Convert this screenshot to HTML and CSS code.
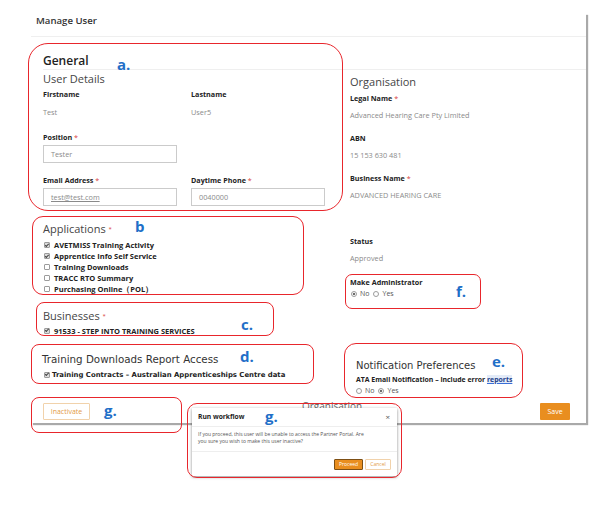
FILE: index.html
```html
<!DOCTYPE html>
<html lang="en">
<head>
<meta charset="utf-8">
<title>Manage User</title>
<link rel="stylesheet" href="styles.css">
</head>
<body>
<div class="page">
  <div class="panel">
    <div class="panel-head">Manage User</div>
    <div class="tab-row"><span class="tab-title">General</span></div>
    <div class="panel-body">
      <div class="col-left">
        <h2 class="sec-title ud-title">User Details</h2>
        <div class="field-grid">
          <div class="field">
            <div class="label">Firstname</div>
            <div class="value">Test</div>
          </div>
          <div class="field">
            <div class="label">Lastname</div>
            <div class="value">User5</div>
          </div>
          <div class="field r2">
            <div class="label">Position <span class="req">*</span></div>
            <div class="input">Tester</div>
          </div>
          <div class="field r3">
            <div class="label">Email Address <span class="req">*</span></div>
            <div class="input"><span class="u">test@test.com</span></div>
          </div>
          <div class="field r3">
            <div class="label">Daytime Phone <span class="req">*</span></div>
            <div class="input">0040000</div>
          </div>
        </div>

        <h2 class="sec-title apps-title">Applications <span class="req-h">*</span></h2>
        <ul class="checks apps-list">
          <li class="check"><span class="cb on"></span>AVETMISS Training Activity</li>
          <li class="check"><span class="cb on"></span>Apprentice Info Self Service</li>
          <li class="check"><span class="cb"></span>Training Downloads</li>
          <li class="check"><span class="cb"></span>TRACC RTO Summary</li>
          <li class="check"><span class="cb"></span>Purchasing Online（POL）</li>
        </ul>

        <h2 class="sec-title biz-title">Businesses <span class="req-h">*</span></h2>
        <ul class="checks biz-list">
          <li class="check"><span class="cb on"></span>91533 - STEP INTO TRAINING SERVICES</li>
        </ul>

        <h2 class="tdr-title">Training Downloads Report Access</h2>
        <ul class="checks tdr-list">
          <li class="check tdr-check"><span class="cb on"></span>Training Contracts – Australian Apprenticeships Centre data</li>
        </ul>
      </div>

      <div class="col-right">
        <h2 class="sec-title org-title">Organisation</h2>
        <div class="label first">Legal Name <span class="req">*</span></div>
        <div class="value">Advanced Hearing Care Pty Limited</div>
        <div class="label next">ABN</div>
        <div class="value">15 153 630 481</div>
        <div class="label next">Business Name <span class="req">*</span></div>
        <div class="value">ADVANCED HEARING CARE</div>
        <div class="label status">Status</div>
        <div class="value">Approved</div>
        <div class="label admin">Make Administrator</div>
        <div class="radios admin-radios">
          <span class="rd on"></span><span class="rl">No</span>
          <span class="rd"></span><span class="rl">Yes</span>
        </div>
        <div class="notif">
          <h2 class="notif-title">Notification Preferences</h2>
          <div class="notif-label">ATA Email Notification – include error <span class="hl">reports</span></div>
          <div class="radios notif-radios">
            <span class="rd"></span><span class="rl">No</span>
            <span class="rd on"></span><span class="rl">Yes</span>
          </div>
        </div>
      </div>

      <div class="footer">
        <span class="btn btn-outline">Inactivate</span>
        <span class="btn btn-save">Save</span>
      </div>
    </div>
  </div>

  <div class="behind-text">Organisation</div>

  <div class="dialog">
    <div class="dlg-head"><span class="dlg-title">Run workflow</span><span class="dlg-close">×</span></div>
    <div class="dlg-body">If you proceed, this user will be unable to access the Partner Portal. Are<br>you sure you wish to make this user inactive?</div>
    <div class="dlg-foot"><span class="dbtn proceed">Proceed</span><span class="dbtn cancel">Cancel</span></div>
  </div>

  <div class="anno anno-a"></div>
  <div class="anno anno-b"></div>
  <div class="anno anno-c"></div>
  <div class="anno anno-d"></div>
  <div class="anno anno-e"></div>
  <div class="anno anno-f"></div>
  <div class="anno anno-g1"></div>
  <div class="anno anno-g2"></div>

  <span class="tag tag-a">a.</span>
  <span class="tag tag-b">b</span>
  <span class="tag tag-c">c.</span>
  <span class="tag tag-d">d.</span>
  <span class="tag tag-e">e.</span>
  <span class="tag tag-f">f.</span>
  <span class="tag tag-g1">g.</span>
  <span class="tag tag-g2">g.</span>
</div>
</body>
</html>
```

FILE: styles.css
```css
html, body {
  margin: 0;
  padding: 0;
  background: #fff;
}

.page {
  position: relative;
  width: 609px;
  height: 505px;
  overflow: hidden;
  background: #fff;
  font-family: "Open Sans", "Noto Sans", sans-serif;
  color: #222;
}

/* ---------- panel ---------- */
.panel {
  margin: 13px 0 0 31px;
  width: 555px;
  background: #fff;
  box-shadow: 2px 2px 1px #a9a9a9;
}

.panel-head {
  padding: 2px 0 9px 5px;
  line-height: 12px;
  font-size: 9.6px;
  font-weight: 600;
  color: #333;
  border-bottom: 1px solid #efefef;
}

.tab-row {
  margin-left: 12px;
  padding-top: 14px;
  line-height: 16px;
  border-bottom: 1px solid #efefef;
}

.tab-title {
  font-size: 12px;
  font-weight: 600;
  color: #222;
}

.panel-body {
  display: grid;
  grid-template-columns: 307px 1fr;
  align-items: start;
  padding: 0 16px 3px 12px;
}

.sec-title {
  margin: 0;
  font-size: 11px;
  font-weight: 400;
  line-height: 14px;
  color: #454545;
}

.ud-title { margin-top: 2px; }

.field-grid {
  display: grid;
  grid-template-columns: 148px 148px;
  margin-top: 3px;
}

.field.r2 { margin-top: 15px; grid-column: 1; }
.field.r3 { margin-top: 12px; }
.field.r2 + .field.r3 { grid-column: 1; }

.label {
  font-size: 7.2px;
  font-weight: 700;
  line-height: 10px;
  color: #222;
}

.req {
  color: #d9413c;
  font-weight: 400;
}

.req-h {
  color: #d9413c;
  font-size: 6px;
  vertical-align: 2px;
}

.value {
  margin-top: 7.5px;
  font-size: 7.3px;
  line-height: 10px;
  color: #8a8a8a;
}

.input {
  margin-top: 3px;
  width: 134px;
  height: 18px;
  box-sizing: border-box;
  border: 1px solid #cbcbcb;
  padding-left: 7px;
  font-size: 7.3px;
  line-height: 16px;
  color: #8a8a8a;
}

.u { text-decoration: underline; }

/* ---------- checklists ---------- */
.checks {
  list-style: none;
  margin: 0;
  padding: 0;
}

.check {
  display: flex;
  align-items: center;
  gap: 4px;
  height: 11px;
  padding-left: 1px;
  font-size: 7.5px;
  font-weight: 700;
  color: #222;
  white-space: nowrap;
}

.cb {
  position: relative;
  flex: none;
  width: 6px;
  height: 6px;
  box-sizing: border-box;
  border: 1px solid #9c9c9c;
  border-radius: 1px;
  background: #fff;
}

.cb.on { background: #dcdcdc; }

.cb.on::after {
  content: "";
  position: absolute;
  left: 1px;
  top: -0.5px;
  width: 1.4px;
  height: 2.8px;
  border: solid #444;
  border-width: 0 1px 1px 0;
  transform: rotate(45deg);
}

.apps-title { margin-top: 16px; }
.apps-list { margin-top: 4px; }

.biz-title { margin-top: 14px; }
.biz-list { margin-top: 2.5px; }

.tdr-title {
  margin: 16.5px 0 0 -1px;
  font-family: "DejaVu Sans", sans-serif;
  font-size: 10.3px;
  font-weight: 400;
  line-height: 13px;
  color: #333;
}

.tdr-list { margin-top: 4px; }

.tdr-check {
  gap: 2px;
  font-family: "DejaVu Sans", sans-serif;
  font-size: 6.9px;
  height: 10px;
}

/* ---------- right column ---------- */
.org-title { margin-top: 5px; }
.label.first { margin-top: 3.5px; }
.label.next { margin-top: 12.5px; }
.label.status { margin-top: 35.7px; }
.label.admin { margin-top: 14.3px; }

.radios {
  display: flex;
  align-items: center;
  height: 10px;
  font-size: 7px;
  color: #555;
}

.admin-radios { margin-top: 1.4px; padding-left: 1px; }

.rd {
  flex: none;
  width: 6px;
  height: 6px;
  box-sizing: border-box;
  border: 1px solid #9c9c9c;
  border-radius: 50%;
  background: #fff;
}

.rd.on {
  background: radial-gradient(circle, #6d6d6d 0 1.2px, #fff 1.6px);
}

.rl { margin: 0 4px 0 3px; }

.notif {
  margin: 59.8px 0 0 6px;
}

.notif-title {
  margin: 0;
  font-family: "DejaVu Sans", sans-serif;
  font-size: 10px;
  font-weight: 400;
  line-height: 13px;
  color: #333;
}

.notif-label {
  margin-top: 3.4px;
  font-size: 6.9px;
  font-weight: 700;
  line-height: 9px;
  color: #222;
  white-space: nowrap;
}

.hl {
  color: #1e3f8a;
  background: #e3ebf8;
  text-decoration: underline;
  text-decoration-color: #3a6fd8;
}

.notif-radios { margin-top: 1.5px; }

/* ---------- footer ---------- */
.footer {
  grid-column: 1 / -1;
  display: flex;
  justify-content: space-between;
  margin-top: 7.4px;
}

.btn {
  display: flex;
  align-items: center;
  justify-content: center;
  height: 17px;
  box-sizing: border-box;
  font-size: 7px;
  border-radius: 1px;
}

.btn-outline {
  width: 47px;
  border: 1px solid #f1d2ab;
  color: #e39a47;
  background: #fff;
}

.btn-save {
  width: 30px;
  background: #e98e1f;
  color: #fff;
}

/* ---------- dialog ---------- */
.behind-text {
  position: absolute;
  left: 302px;
  top: 400px;
  font-size: 10px;
  line-height: 12px;
  color: #666;
}

.dialog {
  position: absolute;
  left: 192px;
  top: 408px;
  width: 205px;
  height: 68px;
  background: #fff;
  box-shadow: 0 1px 3px rgba(0, 0, 0, 0.45);
}

.dlg-head {
  display: flex;
  justify-content: space-between;
  align-items: center;
  padding: 4px 7px 4px 6px;
  line-height: 10px;
  border-bottom: 1px solid #eee;
}

.dlg-title {
  font-size: 6.7px;
  font-weight: 700;
  color: #222;
}

.dlg-close {
  font-size: 8px;
  color: #555;
}

.dlg-body {
  padding: 4.4px 6px 6px;
  font-size: 5px;
  line-height: 6.7px;
  color: #555;
  white-space: nowrap;
  border-bottom: 1px solid #eee;
}

.dlg-foot {
  display: flex;
  justify-content: flex-end;
  gap: 2px;
  padding: 7px 6px 0;
}

.dbtn {
  display: flex;
  align-items: center;
  justify-content: center;
  height: 11px;
  box-sizing: border-box;
  font-size: 5px;
  border-radius: 1px;
}

.proceed {
  width: 29px;
  background: #e98e1f;
  border: 1px solid #7d4f14;
  color: #fff;
}

.cancel {
  width: 26px;
  background: #fff;
  border: 1px solid #f1d2ab;
  color: #e39a47;
}

/* ---------- annotations ---------- */
.anno {
  position: absolute;
  box-sizing: border-box;
  border: 1.5px solid #e8262c;
  border-radius: 10px;
}

.anno-a { left: 28px; top: 43px; width: 315px; height: 168px; border-radius: 20px; }
.anno-b { left: 32px; top: 216px; width: 272px; height: 79px; border-radius: 11px; }
.anno-c { left: 36px; top: 302px; width: 238px; height: 34px; border-radius: 8px; }
.anno-d { left: 31px; top: 344px; width: 283px; height: 40px; border-radius: 8px; }
.anno-e { left: 344px; top: 343px; width: 179px; height: 55px; border-radius: 12px; }
.anno-f { left: 345px; top: 274px; width: 136px; height: 35px; border-radius: 7px; }
.anno-g1 { left: 31px; top: 397px; width: 151px; height: 36px; border-radius: 8px; }
.anno-g2 { left: 187px; top: 403px; width: 215px; height: 75px; border-radius: 10px; }

.tag {
  position: absolute;
  font-family: "Open Sans", sans-serif;
  font-size: 15px;
  font-weight: 700;
  line-height: 15px;
  color: #1f6fc8;
}

.tag-a { left: 117px; top: 56.7px; }
.tag-b { left: 135px; top: 218.7px; }
.tag-c { left: 241px; top: 316.7px; }
.tag-d { left: 240px; top: 348.7px; }
.tag-e { left: 492px; top: 353.7px; }
.tag-f { left: 456px; top: 283.7px; }
.tag-g1 { left: 104px; top: 403.2px; }
.tag-g2 { left: 265px; top: 409.2px; }
```
